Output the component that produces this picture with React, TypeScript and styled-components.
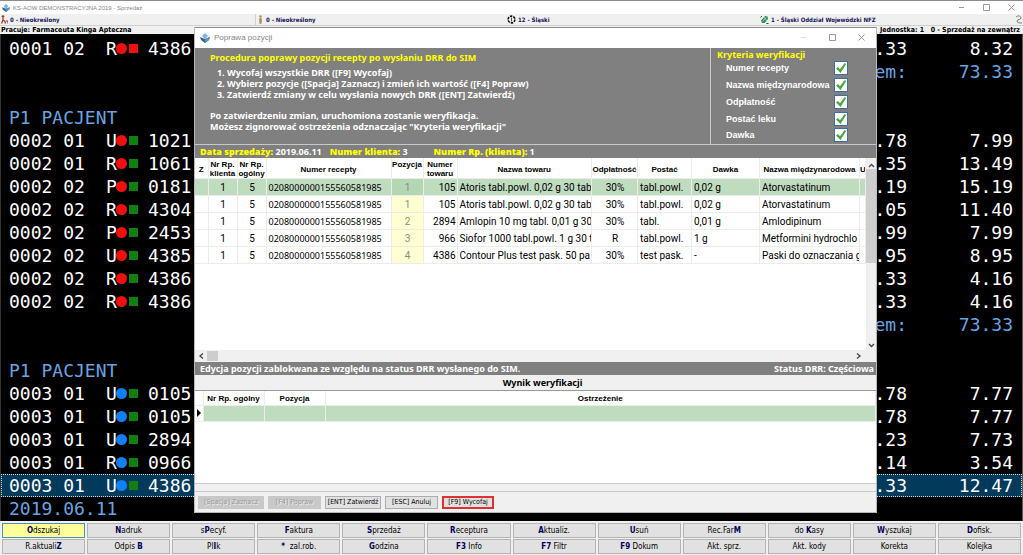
import React from "react";
import styled, { createGlobalStyle, css } from "styled-components";

const tahoma = `"DejaVu Sans Condensed", "DejaVu Sans", sans-serif`;
const noto = `"Noto Sans", "Open Sans", sans-serif`;
const roboto = `Roboto, "Noto Sans", sans-serif`;
const arial = `"Liberation Sans", Arial, sans-serif`;
const mono = `"DejaVu Sans Mono", monospace`;

const Global = createGlobalStyle`
  * { box-sizing: border-box; }
  html, body { margin: 0; background: #f0f0f0; }
  button, input { font: inherit; margin: 0; padding: 0; }
`;

const Desktop = styled.div`
  position: relative;
  display: flex;
  flex-direction: column;
  min-height: 100vh;
  overflow: hidden;
  font-family: ${noto};
  font-size: 9px;
  color: #000;
`;

const TitleBar = styled.header<{ $tall?: boolean }>`
  display: flex;
  align-items: center;
  height: ${(p) => (p.$tall ? 21 : 14)}px;
  padding: ${(p) => (p.$tall ? "0 11px 0 5px" : "0 8px 0 2px")};
  gap: ${(p) => (p.$tall ? 4 : 3)}px;
  border-top: 1px solid #8c8c8c;
  background: #fff;
  color: #858585;
  font-family: ${arial};
  font-size: ${(p) => (p.$tall ? 8 : 6)}px;
`;

const TitleText = styled.span`
  flex: 1;
`;

const WindowButtons = styled.div<{ $tall?: boolean }>`
  display: flex;
  gap: ${(p) => (p.$tall ? 22 : 18)}px;
`;

const WindowButton = styled.button`
  display: flex;
  border: 0;
  background: none;
  color: #999;
`;

const StatusBar = styled.div`
  display: grid;
  grid-template-columns: 256fr 250fr 253fr 264fr;
  height: 12px;
  background: #f0f0f0;
  border-bottom: 1px solid #d0d0d0;
  font-family: ${tahoma};
  font-size: 6px;
  font-weight: bold;
  color: #14145a;
`;

const StatusCell = styled.div<{ $divided?: boolean }>`
  display: flex;
  align-items: center;
  gap: 2px;
  padding-left: 1px;
  border-right: ${(p) => (p.$divided ? "1px solid #d0d0d0" : "0")};
  white-space: nowrap;
`;

const WorkerBar = styled.div`
  display: flex;
  justify-content: space-between;
  align-items: center;
  height: 8px;
  padding: 0 3px 0 1px;
  background: #f0f0f0;
  font-family: ${tahoma};
  font-size: 7px;
  font-weight: bold;
  white-space: pre;
`;

const Sales = styled.main`
  flex: 1;
  padding: 3px 0 0;
  background: #000;
  border-right: 1px solid #555;
  border-left: 1px solid #333;
  font-family: ${mono};
  font-size: 18px;
  line-height: 23px;
  color: #fff;
`;

const SaleRow = styled.div<{ $blue?: boolean; $active?: boolean }>`
  display: flex;
  align-items: center;
  height: 23px;
  padding: 0 9px 0 8px;
  white-space: pre;
  color: ${(p) => (p.$blue ? "#6ba3e0" : "#fff")};
  ${(p) =>
    p.$active &&
    css`
      background: #023a5c;
      outline: 1px dotted #cfd8dc;
      outline-offset: -1px;
    `}
`;

const SaleNumber = styled.span`
  width: 97px;
`;
const SaleKind = styled.span`
  width: 10px;
`;
const Marks = styled.span`
  display: flex;
  align-items: center;
  gap: 2px;
  width: 32px;
`;
const Dot = styled.i<{ $color: string }>`
  width: 11px;
  height: 11px;
  border-radius: 50%;
  background: ${(p) => p.$color};
`;
const Square = styled.i<{ $color: string }>`
  width: 9px;
  height: 9px;
  background: ${(p) => p.$color};
`;
const SaleCode = styled.span`
  flex: 1;
`;
const SalePrice = styled.span`
  width: 106px;
  text-align: right;
`;

const Dialog = styled.section`
  position: absolute;
  top: 27px;
  left: 194px;
  right: 146px;
  height: 486px;
  display: flex;
  flex-direction: column;
  background: #f0f0f0;
  border: 1px solid #b8b8b8;
  border-top: 0;
`;

const Intro = styled.div`
  display: flex;
  height: 97px;
  background: #808080;
  color: #fff;
  font-size: 9px;
  font-weight: bold;
  border-bottom: 1px solid #c8c8c8;
`;

const Procedure = styled.div`
  flex: 1;
  padding: 4px 0 0 15px;
  line-height: 11px;
  white-space: nowrap;
`;

const Heading = styled.h2`
  margin: 0;
  font-size: 9px;
  line-height: 11px;
  color: #ffff00;
`;

const Steps = styled.ol`
  margin: 4px 0 10px;
  padding-left: 17px;
`;

const Paragraph = styled.p`
  margin: 0;
`;

const Criteria = styled.fieldset`
  display: flex;
  flex-direction: column;
  width: 166px;
  margin: 0;
  padding: 1px 0 0 6px;
  border: 0;
  border-left: 1px solid #c8c8c8;
`;

const Criterion = styled.label`
  display: flex;
  align-items: center;
  justify-content: space-between;
  width: 131px;
  height: 17px;
  padding-left: 9px;
  font-family: ${arial};
  white-space: nowrap;
`;

const CheckHolder = styled.span`
  display: grid;
  flex: none;
  width: 14px;
  height: 14px;
  background: #fff;
  border: 1px solid #3f6f9f;
  > * {
    grid-area: 1 / 1;
  }
`;

const CheckInput = styled.input`
  appearance: none;
  width: 12px;
  height: 12px;
`;

const Strip = styled.div`
  display: flex;
  align-items: center;
  height: 13px;
  padding: 0 2px 0 5px;
  background: #808080;
  color: #fff;
  font-size: 9px;
  font-weight: bold;
  white-space: pre;
`;

const StripField = styled.span<{ $wide?: boolean }>`
  margin-right: ${(p) => (p.$wide ? 26 : 8)}px;
  b {
    color: #ffff00;
  }
`;

const Push = styled.span`
  margin-left: auto;
`;

const GridArea = styled.div`
  display: flex;
  height: 194px;
  background: #fff;
`;

const TableBox = styled.div`
  flex: 1;
  min-width: 0;
  overflow: hidden;
`;

const Table = styled.table`
  width: 100%;
  table-layout: fixed;
  border-collapse: collapse;
  white-space: nowrap;
  th,
  td {
    padding: 0;
    overflow: hidden;
    border-right: 1px solid #ececec;
    border-bottom: 1px solid #ececec;
  }
  th {
    padding-top: 2px;
    font-family: ${arial};
    font-size: 8px;
    line-height: 9px;
    font-weight: bold;
    white-space: pre;
  }
`;

const HeadRow = styled.tr<{ $h: number }>`
  height: ${(p) => p.$h}px;
`;

const DataRow = styled.tr<{ $selected?: boolean }>`
  height: 17px;
  font-family: ${roboto};
  font-size: 10px;
  line-height: 15px;
  background: ${(p) => (p.$selected ? "#bfdcbf" : "#fff")};
`;

const Cell = styled.td<{ $align?: string; $pos?: boolean; $selected?: boolean; $small?: boolean }>`
  &&& {
    padding: 0 1px 0 2px;
  }
  text-align: ${(p) => p.$align || "left"};
  ${(p) =>
    p.$small &&
    css`
      font-family: ${noto};
      font-size: 9px;
    `}
  ${(p) =>
    p.$pos &&
    css`
      color: #8a8a80;
      background: ${p.$selected ? "#b3d6b3" : "#ffffd2"};
    `}
`;

const VScroll = styled.div`
  display: flex;
  flex-direction: column;
  align-items: center;
  width: 10px;
  padding-top: 3px;
  background: #f0f0f0;
`;

const VThumb = styled.div`
  width: 10px;
  height: 94px;
  margin-bottom: auto;
  background: #cdcdcd;
`;

const HScroll = styled.div`
  display: flex;
  align-items: center;
  height: 12px;
  padding: 0 14px 0 3px;
  background: #f0f0f0;
`;

const HThumb = styled.div`
  width: 11px;
  height: 10px;
  margin: 0 auto 0 2px;
  background: #cdcdcd;
`;

const ResultTitle = styled.h3`
  margin: 0;
  height: 16px;
  padding-left: 14px;
  border-bottom: 1px solid #999;
  font-size: 9px;
  line-height: 15px;
  text-align: center;
`;

const Results = styled.div`
  height: 94px;
  background: #fff;
  border-bottom: 1px solid #c8c8c8;
`;

const ResultRow = styled.tr`
  height: 16px;
  background: #bfdcbf;
  td:first-child {
    background: #fff;
  }
`;

const Pointer = styled.svg`
  display: block;
`;

const Actions = styled.footer`
  display: flex;
  align-items: center;
  gap: 4px;
  height: 21px;
  margin-top: 7px;
  padding-left: 3px;
  border-top: 1px solid #c8c8c8;
`;

const ActionButton = styled.button<{ $w: number; $marked?: boolean }>`
  width: ${(p) => p.$w}px;
  height: 13px;
  border: ${(p) => (p.$marked ? "2px solid #e03030" : "1px solid #adadad")};
  background: #e1e1e1;
  color: #000;
  font-family: ${tahoma};
  font-size: 7px;
  line-height: 9px;
  white-space: nowrap;
  &:disabled {
    background: #c8c8c8;
    border-color: #c8c8c8;
    color: #989898;
    text-shadow: 1px 1px 0 #eee;
  }
`;

const Commands = styled.nav`
  display: grid;
  grid-template-columns: repeat(12, 1fr);
  gap: 1px 2px;
  padding: 2px 2px 1px;
  background: #f0f0f0;
  font-family: ${tahoma};
`;

const Command = styled.button<{ $hot?: boolean }>`
  height: 15px;
  border: 1px solid ${(p) => (p.$hot ? "#4a90c0" : "#b4b4b4")};
  background: ${(p) => (p.$hot ? "#ffff99" : "#e1e1e1")};
  color: #000;
  font-size: 8px;
  line-height: 12px;
  white-space: pre;
  b {
    color: #000060;
  }
`;

const AppIcon = ({ size }: { size: number }) => (
  <svg width={size} height={size} viewBox="0 0 10 10" aria-hidden="true">
    <path d="M5 0 8 3 5 6 2 3Z" fill="#7fb2dc" />
    <path d="M0 4 5 6 10 4 9 7 5 10 1 7Z" fill="#2f6296" />
    <path d="M5 6 10 4 9 7 5 10Z" fill="#5b93c4" />
  </svg>
);

const MinIcon = ({ faint }: { faint?: boolean }) => (
  <svg width="7" height="7" viewBox="0 0 7 7" aria-hidden="true">
    <path d="M1 3.500h5" stroke={faint ? "#ddd" : "#999"} />
  </svg>
);
const MaxIcon = () => (
  <svg width="7" height="7" viewBox="0 0 7 7" aria-hidden="true">
    <path d="M.5.5h6v6h-6z" fill="none" stroke="#999" />
  </svg>
);
const CloseIcon = () => (
  <svg width="7" height="7" viewBox="0 0 7 7" aria-hidden="true">
    <path d="M.5.5l6 6M6.500.5l-6 6" stroke="#999" />
  </svg>
);
const Chevron = ({ d }: { d: string }) => (
  <svg width="7" height="8" viewBox="0 0 7 8" aria-hidden="true">
    <path d={d} fill="none" stroke="#444" strokeWidth="1.3" />
  </svg>
);
const PersonIcon = ({ color, walker }: { color: string; walker?: boolean }) => (
  <svg width="7" height="9" viewBox="0 0 7 9" aria-hidden="true">
    <circle cx={walker ? 2 : 3.5} cy="1.500" r="1.300" fill={color} />
    {walker ? (
      <path d="M2 3v2.500l2 .5M2 5l-1.500 3.500M3.500 5.500l1 3M5 6h2v2.500" fill="none" stroke={color} strokeWidth="1.200" />
    ) : (
      <path d="M2.500 3h2l.5 3-.8 3H2.800L2 6z" fill={color} />
    )}
  </svg>
);
const WheelIcon = () => (
  <svg width="9" height="9" viewBox="0 0 9 9" aria-hidden="true">
    <circle cx="4.500" cy="4.500" r="3.400" fill="none" stroke="#111" strokeWidth="1.600" strokeDasharray="2.500 1" />
    <path d="M4.500 2.500v4" stroke="#555" />
  </svg>
);
const LeafIcon = () => (
  <svg width="9" height="9" viewBox="0 0 9 9" aria-hidden="true">
    <path d="M1 5.500 5 1l2.500.5L8 4 4.500 8 2 8z" fill="#2c8a5b" />
    <path d="M2.500 6.500 6 2.500M4 2l3 4" stroke="#d8efe2" strokeWidth=".7" fill="none" />
    <path d="M.5 2.500 2 1M6.500 8.500h2" stroke="#1d4f34" fill="none" />
  </svg>
);
const HookIcon = () => (
  <svg width="8" height="9" viewBox="0 0 8 9" aria-hidden="true">
    <path d="M1 2c2-2 5-1 5 1S2 4 2 6s3 2 5 2" stroke="#777" fill="none" />
  </svg>
);

type Sale = { no?: string; kind?: string; a?: string; b?: string; code?: string; part?: string; price?: string; label?: string; active?: boolean };
const RED = "#f01010";
const GREEN = "#108010";
const BLUE = "#1080f8";
const sale = (no: string, kind: string, code: string, part: string, price: string, a = RED, b = GREEN): Sale => ({ no, kind, code, part, price, a, b });

const sales: Sale[] = [
  sale("0001 02", "R", "4386", ".33", "8.32", RED, RED),
  { label: "", part: "em:", price: "73.33" },
  {},
  { label: "P1 PACJENT" },
  sale("0002 01", "U", "1021", ".78", "7.99"),
  sale("0002 01", "R", "1061", ".35", "13.49"),
  sale("0002 02", "P", "0181", ".19", "15.19"),
  sale("0002 02", "R", "4304", ".05", "11.40"),
  sale("0002 02", "P", "2453", ".99", "7.99"),
  sale("0002 02", "U", "4385", ".95", "8.95"),
  sale("0002 02", "R", "4386", ".33", "4.16"),
  sale("0002 02", "R", "4386", ".33", "4.16"),
  { label: "", part: "em:", price: "73.33" },
  {},
  { label: "P1 PACJENT" },
  sale("0003 01", "U", "0105", ".78", "7.77", BLUE),
  sale("0003 01", "U", "0105", ".78", "7.77", BLUE),
  sale("0003 01", "U", "2894", ".23", "7.73", BLUE),
  sale("0003 01", "R", "0966", ".14", "3.54", BLUE),
  { ...sale("0003 01", "U", "4386", ".33", "12.47", BLUE), active: true },
  { label: "2019.06.11" },
];

const columns: [string, number | undefined][] = [
  ["Z", 13],
  ["Nr Rp.\nklienta", 29],
  ["Nr Rp.\nogólny", 29],
  ["Numer recepty", 125],
  ["Pozycja\n ", 32],
  ["Numer\ntowaru", 34],
  ["Nazwa towaru", undefined],
  ["Odpłatność", 46],
  ["Postać", 54],
  ["Dawka", 68],
  ["Nazwa międzynarodowa", 100],
  ["U", 6],
];

const items = [
  ["1", "105", "Atoris tabl.powl. 0,02 g 30 tab", "30%", "tabl.powl.", "0,02 g", "Atorvastatinum"],
  ["1", "105", "Atoris tabl.powl. 0,02 g 30 tab", "30%", "tabl.powl.", "0,02 g", "Atorvastatinum"],
  ["2", "2894", "Amlopin 10 mg tabl. 0,01 g 30", "30%", "tabl.", "0,01 g", "Amlodipinum"],
  ["3", "966", "Siofor 1000 tabl.powl. 1 g 30 t", "R", "tabl.powl.", "1 g", "Metformini hydrochlo"],
  ["4", "4386", "Contour Plus test pask. 50 pa", "30%", "test pask.", "-", "Paski do oznaczania g"],
];

const criteria = ["Numer recepty", "Nazwa międzynarodowa", "Odpłatność", "Postać leku", "Dawka"];

const commands = [
  "*O*dszukaj", "*N*adruk", "s*P*ecyf.", "*F*aktura", "*S*przedaż", "*R*eceptura", "*A*ktualiz.", "*U*suń", "Rec.Far*M*", "do *K*asy", "*W*yszukaj", "*D*ofisk.",
  "R.aktuali*Z*", "Odpis *B*", "Pl*I*k", "**** zal.rob.", "*G*odzina", "*F3* Info", "*F7* Filtr", "*F9* Dokum", "Akt. sprz.", "Akt. kody", "Korekta", "Kolejka",
];

const renderCommand = (text: string) =>
  text.startsWith("****") ? (
    <>
      <b>*</b>
      {" " + text.slice(4)}
    </>
  ) : (
    text.split("*").map((part, i) => (i % 2 ? <b key={i}>{part}</b> : part))
  );

const Controls = ({ tall }: { tall?: boolean }) => (
  <WindowButtons $tall={tall}>
    <WindowButton aria-label="Minimalizuj"><MinIcon faint={tall} /></WindowButton>
    <WindowButton aria-label="Maksymalizuj"><MaxIcon /></WindowButton>
    <WindowButton aria-label="Zamknij"><CloseIcon /></WindowButton>
  </WindowButtons>
);

export default function App() {
  return (
    <Desktop>
      <Global />
      <TitleBar>
        <AppIcon size={8} />
        <TitleText>KS-AOW DEMONSTRACYJNA 2019 - Sprzedaż</TitleText>
        <Controls />
      </TitleBar>
      <StatusBar>
        <StatusCell $divided><PersonIcon color="#a03030" walker />0 - Nieokreślony</StatusCell>
        <StatusCell><PersonIcon color="#b09060" />0 - Nieokreślony</StatusCell>
        <StatusCell><WheelIcon />12 - Śląski</StatusCell>
        <StatusCell><LeafIcon />1 - Śląski Oddział Wojewódzki NFZ<Push><HookIcon /></Push></StatusCell>
      </StatusBar>
      <WorkerBar>
        <span>Pracuje: Farmaceuta Kinga Apteczna</span>
        <span>{"Jednostka: 1   0 - Sprzedaż na zewnątrz"}</span>
      </WorkerBar>
      <Sales>
        {sales.map((s, i) => (
          <SaleRow key={i} $blue={!s.no} $active={s.active}>
            {s.no && (
              <>
                <SaleNumber>{s.no}</SaleNumber>
                <SaleKind>{s.kind}</SaleKind>
                <Marks>
                  <Dot $color={s.a!} />
                  <Square $color={s.b!} />
                </Marks>
              </>
            )}
            <SaleCode>{s.no ? s.code : s.label}</SaleCode>
            <span>{s.part}</span>
            <SalePrice>{s.price}</SalePrice>
          </SaleRow>
        ))}
      </Sales>
      <Commands>
        {commands.map((c, i) => (
          <Command key={c} $hot={i === 0}>{renderCommand(c)}</Command>
        ))}
      </Commands>

      <Dialog role="dialog" aria-label="Poprawa pozycji">
        <TitleBar $tall>
          <AppIcon size={10} />
          <TitleText>Poprawa pozycji</TitleText>
          <Controls tall />
        </TitleBar>
        <Intro>
          <Procedure>
            <Heading>Procedura poprawy pozycji recepty po wysłaniu DRR do SIM</Heading>
            <Steps>
              <li>Wycofaj wszystkie DRR ([F9] Wycofaj)</li>
              <li>Wybierz pozycje ([Spacja] Zaznacz) i zmień ich wartość ([F4] Popraw)</li>
              <li>Zatwierdź zmiany w celu wysłania nowych DRR ([ENT] Zatwierdź)</li>
            </Steps>
            <Paragraph>Po zatwierdzeniu zmian, uruchomiona zostanie weryfikacja.</Paragraph>
            <Paragraph>Możesz zignorować ostrzeżenia odznaczając "Kryteria weryfikacji"</Paragraph>
          </Procedure>
          <Criteria>
            <Heading>Kryteria weryfikacji</Heading>
            {criteria.map((c) => (
              <Criterion key={c}>
                {c}
                <CheckHolder>
                  <CheckInput type="checkbox" defaultChecked />
                  <svg width="12" height="12" viewBox="0 0 12 12" aria-hidden="true">
                    <path d="M1 6.500 3 5 5 7.300 9.500 1.200 11.300 1.800 5.500 11Z" fill="#4fa23c" />
                  </svg>
                </CheckHolder>
              </Criterion>
            ))}
          </Criteria>
        </Intro>
        <Strip>
          <StripField><b>Data sprzedaży:</b> 2019.06.11</StripField>
          <StripField $wide><b>Numer klienta:</b> 3</StripField>
          <StripField><b>Numer Rp. (klienta):</b> 1</StripField>
        </Strip>
        <GridArea>
          <TableBox>
            <Table>
              <colgroup>
                {columns.map(([name, w]) => (
                  <col key={name} width={w} />
                ))}
              </colgroup>
              <thead>
                <HeadRow $h={21}>
                  {columns.map(([name]) => (
                    <th key={name}>{name}</th>
                  ))}
                </HeadRow>
              </thead>
              <tbody>
                {items.map((r, i) => (
                  <DataRow key={i} $selected={i === 0}>
                    <Cell />
                    <Cell $align="center">1</Cell>
                    <Cell $align="center">5</Cell>
                    <Cell $small>0208000000155560581985</Cell>
                    <Cell $align="center" $pos $selected={i === 0}>{r[0]}</Cell>
                    <Cell $align="right">{r[1]}</Cell>
                    <Cell>{r[2]}</Cell>
                    <Cell $align="center">{r[3]}</Cell>
                    <Cell>{r[4]}</Cell>
                    <Cell>{r[5]}</Cell>
                    <Cell>{r[6]}</Cell>
                    <Cell />
                  </DataRow>
                ))}
              </tbody>
            </Table>
          </TableBox>
          <VScroll>
            <Chevron d="M1 6l2.500-2.500L6 6" />
            <VThumb />
            <Chevron d="M1 2l2.500 2.500L6 2" />
          </VScroll>
        </GridArea>
        <HScroll>
          <Chevron d="M5 1.500 2 4l3 2.500" />
          <HThumb />
          <Chevron d="M2 1.500 5 4 2 6.500" />
        </HScroll>
        <Strip>
          <span>Edycja pozycji zablokwana ze względu na status DRR wysłanego do SIM.</span>
          <Push>Status DRR: Częściowa</Push>
        </Strip>
        <ResultTitle>Wynik weryfikacji</ResultTitle>
        <Results>
          <Table>
            <colgroup>
              <col width={8} />
              <col width={61} />
              <col width={61} />
              <col />
            </colgroup>
            <thead>
              <HeadRow $h={14}>
                <th />
                <th>Nr Rp. ogólny</th>
                <th>Pozycja</th>
                <th>Ostrzeżenie</th>
              </HeadRow>
            </thead>
            <tbody>
              <ResultRow>
                <td>
                  <Pointer width="6" height="8" viewBox="0 0 6 8" aria-hidden="true">
                    <path d="M2 0l4 4-4 4z" />
                  </Pointer>
                </td>
                <td />
                <td />
                <td />
              </ResultRow>
            </tbody>
          </Table>
        </Results>
        <Actions>
          <ActionButton $w={66} disabled>[Spacja] Zaznacz</ActionButton>
          <ActionButton $w={53} disabled>[F4] Popraw</ActionButton>
          <ActionButton $w={56}>[ENT] Zatwierdź</ActionButton>
          <ActionButton $w={53}>[ESC] Anuluj</ActionButton>
          <ActionButton $w={52} $marked>[F9] Wycofaj</ActionButton>
        </Actions>
      </Dialog>
    </Desktop>
  );
}
